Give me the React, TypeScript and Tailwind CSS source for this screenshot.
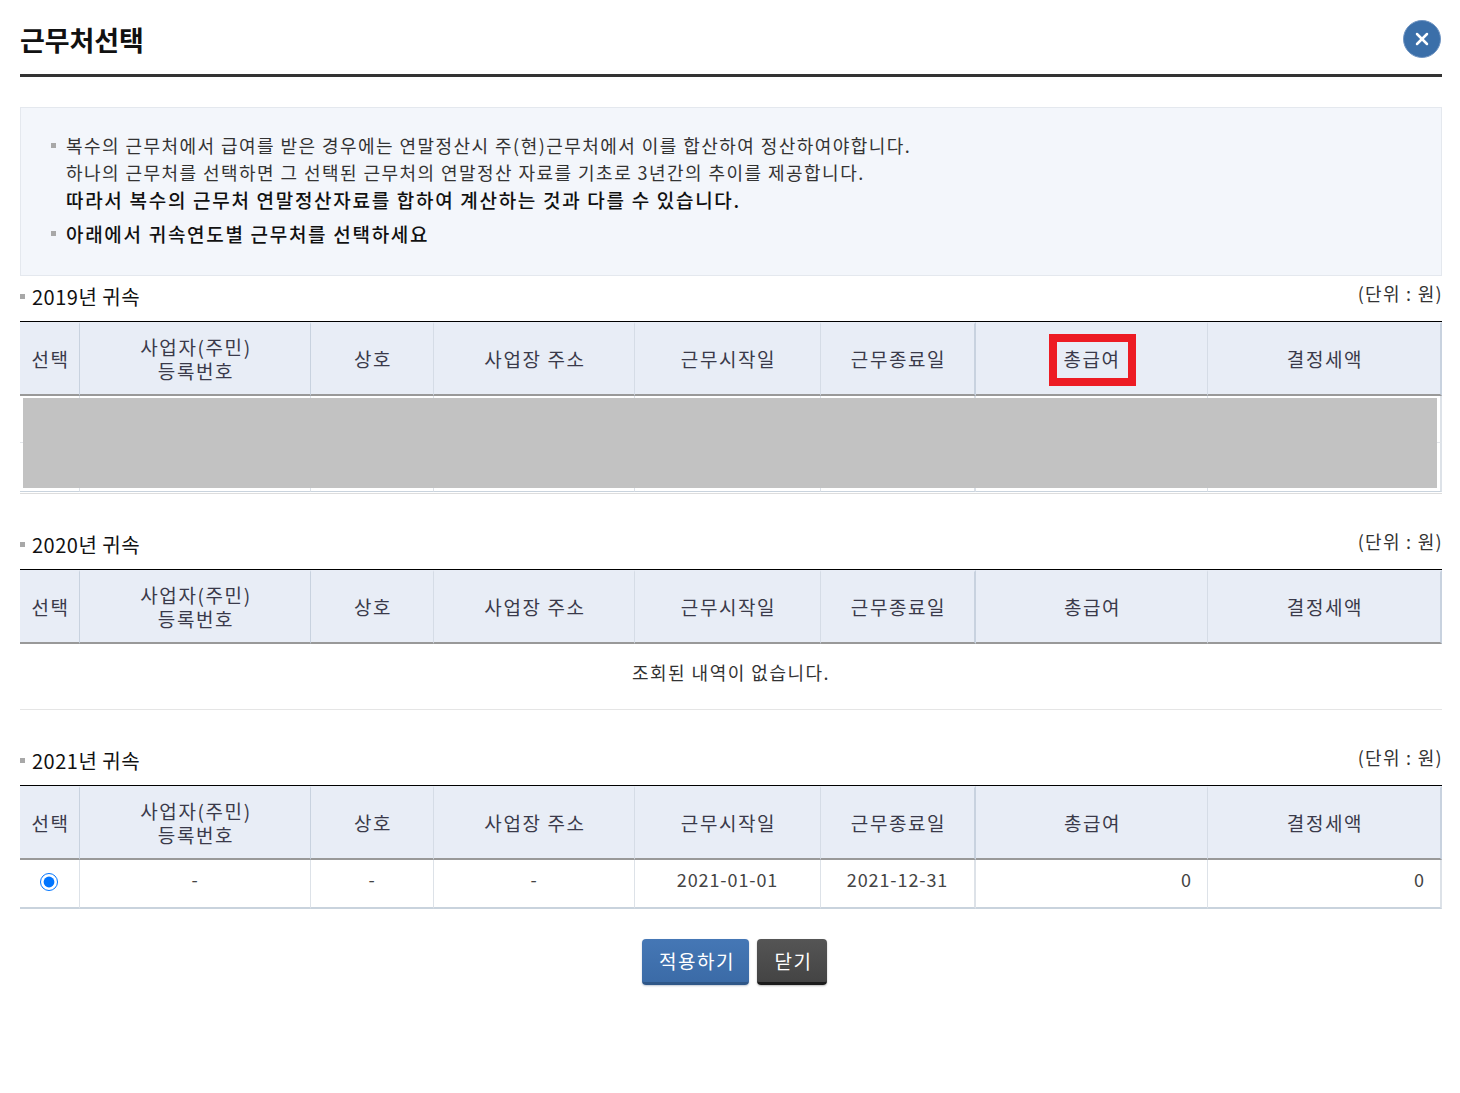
import { X } from "lucide-react";

const font = { fontFamily: '"Noto Sans CJK KR", "Noto Sans", sans-serif' };

const columns = [
  { label: ["선택"], width: "w-[60px]", border: "border-r border-r-[#c8d2df]" },
  { label: ["사업자(주민)", "등록번호"], width: "w-[231px]", border: "border-r border-r-[#c8d2df]" },
  { label: ["상호"], width: "w-[123px]", border: "border-r border-r-[#d5dce6]" },
  { label: ["사업장 주소"], width: "w-[201px]", border: "border-r border-r-[#d5dce6]" },
  { label: ["근무시작일"], width: "w-[186px]", border: "border-r border-r-[#d5dce6]" },
  { label: ["근무종료일"], width: "w-[156px]", border: "border-r-2 border-r-[#c8d2df]" },
  { label: ["총급여"], width: "w-[232px]", border: "border-r border-r-[#d5dce6]" },
  { label: ["결정세액"], width: "w-[233px]", border: "border-r-2 border-r-[#c8d2df]" },
];

function SectionTitle({ year }: { year: number }) {
  return (
    <div className="flex h-[45px] items-start justify-between">
      <div className="flex items-center pt-[7px]">
        <span className="mr-[7px] h-[5px] w-[5px] bg-[#a8a8a8]" />
        <span className="text-[20px] leading-[27px] tracking-[0.5px] text-[#111]">{year}년 귀속</span>
      </div>
      <span className="-mr-[1px] pt-[4px] text-[18px] leading-[27px] tracking-[1.3px] text-[#333]">(단위 : 원)</span>
    </div>
  );
}

function Head({ mark }: { mark?: boolean }) {
  return (
    <thead>
      <tr>
        {columns.map((col, i) => (
          <th
            key={i}
            className={`${col.width} ${col.border} h-[74px] border-t-2 border-t-[#e8edf6] border-b-2 border-b-[#999] bg-[#e8edf6] p-0 pl-[2px] text-center text-[19px] leading-[24px] font-normal tracking-[1.6px] text-[#3a3a4a] last:border-r-2`}
          >
            {mark && col.label[0] === "총급여" ? (
              <span className="inline-block translate-y-[1px] border-[8px] border-[#ed1c24] pt-[5px] pr-[7px] pb-[7px] pl-[6px] leading-[24px]">총급여</span>
            ) : (
              col.label.map((line) => (
                <div key={line}>{line}</div>
              ))
            )}
          </th>
        ))}
      </tr>
    </thead>
  );
}

function Colgroup() {
  return (
    <colgroup>
      <col className="w-[60px]" />
      <col className="w-[231px]" />
      <col className="w-[123px]" />
      <col className="w-[201px]" />
      <col className="w-[186px]" />
      <col className="w-[155px]" />
      <col className="w-[232px]" />
      <col className="w-[234px]" />
    </colgroup>
  );
}

const cellBorders = [
  "border-r border-r-[#dde2e8]",
  "border-r border-r-[#dde2e8]",
  "border-r border-r-[#dde2e8]",
  "border-r border-r-[#dde2e8]",
  "border-r border-r-[#dde2e8]",
  "border-r-2 border-r-[#dde2e8]",
  "border-r border-r-[#dde2e8]",
  "border-r-2 border-r-[#dde2e8]",
];

function Table({ children, mark }: { children: React.ReactNode; mark?: boolean }) {
  return (
    <table className="w-full table-fixed border-separate border-spacing-0 border-t border-t-black">
      <Colgroup />
      <Head mark={mark} />
      <tbody>{children}</tbody>
    </table>
  );
}

function MaskedTable() {
  return (
    <div className="relative">
      <Table mark>
        {[0, 1].map((row) => (
          <tr key={row}>
            {cellBorders.map((b, i) => (
              <td
                key={i}
                className={`${b} ${row === 0 ? "h-[47px] border-b border-b-[#e3e6ea]" : "h-[49px] border-b border-b-[#c9d3dd]"}`}
              />
            ))}
          </tr>
        ))}
      </Table>
      <div className="mt-[1px] h-[1px] bg-[#dddddd]" />
      {/* 가림 처리 */}
      <div className="absolute top-[77px] right-[5px] left-[3px] h-[90px] bg-[#c2c2c2]" />
    </div>
  );
}

export default function App() {
  return (
    <div className="min-h-[1093px] bg-white pr-[18px] pl-[20px] text-[#333]" style={font}>
      <header className="flex h-[77px] items-start justify-between border-b-[3px] border-b-[#333]">
        <h1 className="pt-[20px] text-[27px] leading-[40px] font-bold tracking-[-0.1px] text-[#111]">근무처선택</h1>
        <button className="mt-[20px] mr-[1px] flex h-[38px] w-[38px] items-center justify-center rounded-full border border-[#6f94c2] bg-[#3b6fa9] text-white">
          <X size={20} strokeWidth={3} />
        </button>
      </header>

      <div className="mt-[30px] h-[169px] border border-[#e4e8ee] bg-[#f3f6fb] pt-[24px] pl-[30px]">
        <ul className="text-[18px] leading-[27px] tracking-[1.45px]">
          <li className="flex">
            <span className="mt-[11px] mr-[10px] h-[5px] w-[5px] shrink-0 bg-[#a8a8a8]" />
            <div>
              <p>복수의 근무처에서 급여를 받은 경우에는 연말정산시 주(현)근무처에서 이를 합산하여 정산하여야합니다.</p>
              <p>하나의 근무처를 선택하면 그 선택된 근무처의 연말정산 자료를 기초로 3년간의 추이를 제공합니다.</p>
              <p className="text-[19px] font-medium tracking-[1.7px] text-[#111]">따라서 복수의 근무처 연말정산자료를 합하여 계산하는 것과 다를 수 있습니다.</p>
            </div>
          </li>
          <li className="mt-[7px] flex text-[19px] font-medium tracking-[1.7px] text-[#111]">
            <span className="mt-[11px] mr-[10px] h-[5px] w-[5px] shrink-0 bg-[#a8a8a8]" />
            <p>아래에서 귀속연도별 근무처를 선택하세요</p>
          </li>
        </ul>
      </div>

      <section>
        <SectionTitle year={2019} />
        <MaskedTable />
      </section>

      <section className="mt-[30px]">
        <SectionTitle year={2020} />
        <Table>
          <tr>
            <td
              colSpan={8}
              className="h-[66px] border-b border-b-[#e5e5e5] pb-[8px] text-center text-[18px] tracking-[1.5px] text-[#333]"
            >
              조회된 내역이 없습니다.
            </td>
          </tr>
        </Table>
      </section>

      <section className="mt-[30px]">
        <SectionTitle year={2021} />
        <Table>
          <tr className="text-center text-[18px] tracking-[0.9px] text-[#444]">
            <td className={`${cellBorders[0]} h-[49px] border-b-2 border-b-[#c9d3dd] pb-[9px]`}>
              <input type="radio" defaultChecked className="mr-[2px] h-[18px] w-[18px] align-middle accent-[#0075ff]" />
            </td>
            <td className={`${cellBorders[1]} border-b-2 border-b-[#c9d3dd] pb-[8px]`}>-</td>
            <td className={`${cellBorders[2]} border-b-2 border-b-[#c9d3dd] pb-[8px]`}>-</td>
            <td className={`${cellBorders[3]} border-b-2 border-b-[#c9d3dd] pb-[8px]`}>-</td>
            <td className={`${cellBorders[4]} border-b-2 border-b-[#c9d3dd] pb-[8px]`}>2021-01-01</td>
            <td className={`${cellBorders[5]} border-b-2 border-b-[#c9d3dd] pb-[8px]`}>2021-12-31</td>
            <td className={`${cellBorders[6]} border-b-2 border-b-[#c9d3dd] pr-[15px] pb-[8px] text-right`}>0</td>
            <td className={`${cellBorders[7]} border-b-2 border-b-[#c9d3dd] pr-[15px] pb-[8px] text-right`}>0</td>
          </tr>
        </Table>
      </section>

      <div className="mt-[30px] flex justify-center gap-[8px] pl-[7px]">
        <button className="h-[46px] w-[107px] rounded-[4px] border-b-[3px] border-b-[#2f5788] bg-gradient-to-b from-[#4577b5] to-[#3b6ba7] pt-[1px] pl-[3px] text-[19px] tracking-[1.5px] text-white shadow-[0_1px_2px_#c0c8d4]">
          적용하기
        </button>
        <button className="h-[46px] w-[70px] rounded-[4px] border-b-[3px] border-b-[#1c1c1c] bg-gradient-to-b from-[#555] to-[#444] pt-[1px] pl-[3px] text-[19px] tracking-[1.5px] text-white shadow-[0_1px_2px_#bbb]">
          닫기
        </button>
      </div>
    </div>
  );
}
